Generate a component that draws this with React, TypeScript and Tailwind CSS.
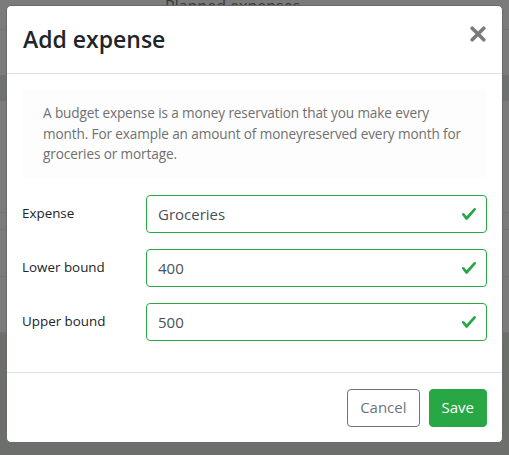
import { useState } from "react";

const font = { fontFamily: '"Open Sans", "Noto Sans", sans-serif' };

function Check() {
  return (
    <svg viewBox="0 0 8 8" className="h-[16px] w-[16px]" aria-hidden>
      <path
        fill="#28a745"
        d="M2.3 6.73L.6 4.53c-.4-1.04.46-1.4 1.1-.8l1.1 1.4 3.4-3.8c.6-.63 1.6-.27 1.2.7l-4 4.6c-.43.5-.8.4-1.1.1z"
      />
    </svg>
  );
}

function Field({ label, value }: { label: string; value: string }) {
  return (
    <div className="flex items-center">
      <label className="w-[124px] shrink-0 text-[13.4px] text-[#212529]">{label}</label>
      <div className="relative flex-1">
        <input
          readOnly
          value={value}
          className="h-[38px] w-full rounded-[4px] border border-[#28a745] bg-white pl-[11px] pr-9 text-[15px] text-[#495057] outline-none"
          style={font}
        />
        <span className="absolute right-[10px] top-[11px]">
          <Check />
        </span>
      </div>
    </div>
  );
}

export default function App() {
  const [fields] = useState([
    { label: "Expense", value: "Groceries" },
    { label: "Lower bound", value: "400" },
    { label: "Upper bound", value: "500" },
  ]);

  return (
    <div className="relative h-[455px] w-[509px] overflow-hidden bg-[#7b7b7b]" style={font}>
      {/* faded page behind the modal */}
      <div className="flex flex-col">
        <div className="h-[30px] border-b border-[#727272] pl-[165px] text-[16px] leading-[12px] text-[#3a3a3a]">
          Planned expenses
        </div>
        <div className="h-[45px]" />
        <div className="h-[26px] bg-[#6e716f]" />
        <div className="h-[112px] border-b border-[#727272]" />
        <div className="h-[17px] border-b border-[#727272]" />
        <div className="h-[47px] border-b border-[#727272]" />
        <div className="h-[56px] border-b border-[#727272]" />
        <div className="h-[122px] bg-[#6d6f6d]" />
      </div>

      {/* modal */}
      <div className="absolute left-[6px] top-[5px] flex h-[438px] w-[497px] flex-col rounded-[5px] border border-[#6a6a6a] bg-white">
        <div className="flex h-[68px] items-center justify-between border-b border-[#dee2e6] px-[16px]">
          <h5 className="text-[23px] font-semibold text-[#212529]">Add expense</h5>
          <button className="mb-[11px]" aria-label="Close">
            <svg viewBox="0 0 16 16" className="h-[16px] w-[16px]">
              <path
                d="M2.2 2.2L13.8 13.8M13.8 2.2L2.2 13.8"
                stroke="#7a7a7a"
                strokeWidth="3.6"
                strokeLinecap="round"
              />
            </svg>
          </button>
        </div>

        <div className="flex flex-1 flex-col px-[15px] pt-[15px]">
          <div className="rounded-[3px] bg-[#fdfdfd] px-[21px] py-[14px] text-[13.6px] leading-[20.5px] tracking-[-0.12px] text-[#707070]">
            A budget expense is a money reservation that you make every month. For example an amount of
            moneyreserved every month for groceries or mortage.
          </div>
          <div className="mt-[16px] flex flex-col gap-[16px]">
            {fields.map((f) => (
              <Field key={f.label} label={f.label} value={f.value} />
            ))}
          </div>
        </div>

        <div className="flex h-[70px] items-center justify-end gap-[9px] border-t border-[#dee2e6] px-[15px]">
          <button className="h-[38px] rounded-[4px] border border-[#6c757d] px-[12px] text-[15px] text-[#6c757d]">
            Cancel
          </button>
          <button className="h-[38px] rounded-[4px] border border-[#28a745] bg-[#28a745] px-[12px] text-[15px] text-white">
            Save
          </button>
        </div>
      </div>
    </div>
  );
}
